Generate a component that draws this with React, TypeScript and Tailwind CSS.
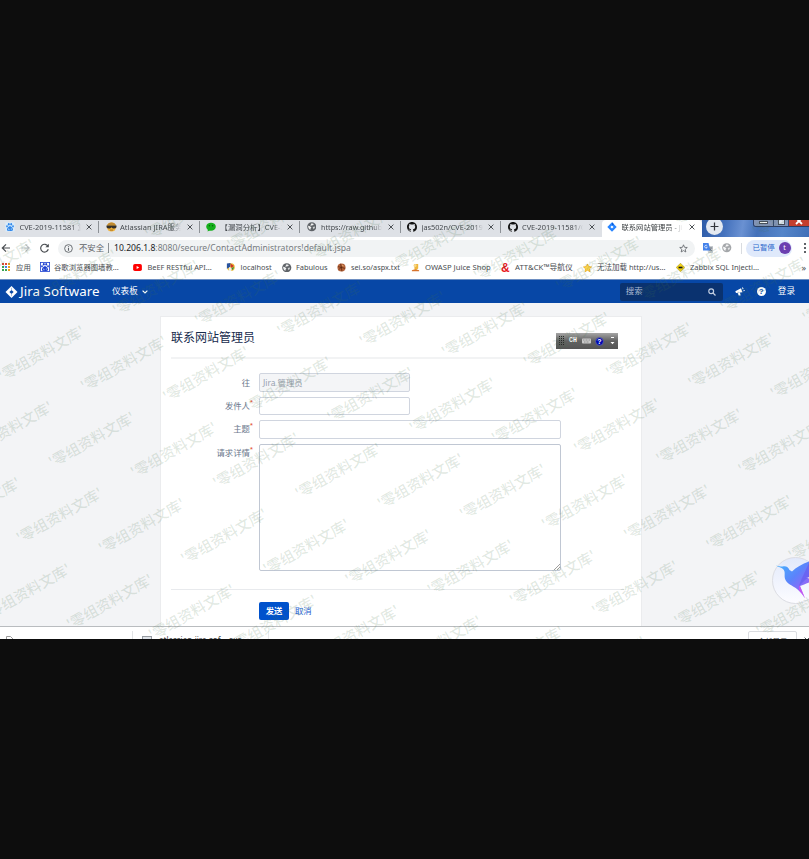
import React from "react";

const UI = "font-['Noto_Sans','Noto_Sans_CJK_SC',sans-serif]";

function Globe({ color = "#5f6368" }: { color?: string }) {
  return (
    <svg viewBox="0 0 10 10" className="h-[9.5px] w-[9.5px] shrink-0">
      <circle cx="5" cy="5" r="4.800" fill={color} />
      <path d="M1.200 4l2 .5 1.500 1.300-.8.8-.2 1.600C2 7.800 1 6 1.200 4zM4.800 1.300l2.400.7-.8 1.300-1.500.1-.6.9-.8-.8z" fill="#fff" opacity=".9" />
      <path d="M6 5.200l2.500-.4-.4 1.500-1.200 1.300z" fill="#fff" opacity=".7" />
    </svg>
  );
}

function Paw({ boxed = false }: { boxed?: boolean }) {
  const c = boxed ? "#1c3fd0" : "#2f86ea";
  return (
    <svg viewBox="0 0 10 10" className="h-[10px] w-[10px] shrink-0">
      <rect x=".4" y=".4" width="9.2" height="9.2" fill={boxed ? "#fff" : "#d9ecfc"} stroke={boxed ? c : "none"} strokeWidth=".8" />
      <ellipse cx="3.8" cy="2.3" rx=".9" ry="1.2" fill={c} />
      <ellipse cx="6.2" cy="2.3" rx=".9" ry="1.2" fill={c} />
      <ellipse cx="2" cy="4.3" rx=".9" ry="1.1" fill={c} />
      <ellipse cx="8" cy="4.3" rx=".9" ry="1.1" fill={c} />
      <path d="M5 4.200c1.200 0 3.300 2.200 3 3.600-.3 1.500-1.700 1.100-3 1.100s-2.700.4-3-1.100C1.700 6.400 3.800 4.200 5 4.200z" fill={c} />
      <path d="M3.600 6.500v1.300h1.200M6.300 6.300v1.600" stroke="#fff" strokeWidth=".5" fill="none" />
    </svg>
  );
}

function Github() {
  return (
    <svg viewBox="0 0 16 16" className="h-[10px] w-[10px] shrink-0">
      <path fill="#111" d="M8 0C3.580 0 0 3.580 0 8c0 3.540 2.290 6.530 5.470 7.590.4.070.55-.17.55-.38 0-.19-.01-.82-.01-1.490-2.010.37-2.530-.49-2.690-.94-.09-.23-.48-.94-.82-1.130-.28-.15-.68-.52-.01-.53.63-.01 1.080.58 1.230.82.72 1.210 1.870.87 2.330.66.070-.52.28-.87.51-1.070-1.780-.2-3.640-.89-3.640-3.950 0-.87.31-1.590.82-2.150-.08-.2-.36-1.020.08-2.120 0 0 .67-.21 2.200.82a7.600 7.600 0 014 0c1.530-1.040 2.200-.82 2.200-.82.44 1.100.16 1.920.08 2.120.51.56.82 1.270.82 2.150 0 3.070-1.870 3.750-3.650 3.950.29.25.54.73.54 1.480 0 1.070-.01 1.930-.01 2.200 0 .21.15.46.55.38A8 8 0 0016 8c0-4.420-3.580-8-8-8z" />
    </svg>
  );
}

function Ninja() {
  return (
    <svg viewBox="0 0 11 10" className="h-[10px] w-[11px] shrink-0">
      <circle cx="5.500" cy="5" r="4.600" fill="#f0b23c" />
      <path d="M1 3.200C1.500 1.500 3.400.4 5.500.4S9.500 1.500 10 3.200z" fill="#c08a30" />
      <path d="M.5 3.500h10v1.300c0 1.200-1 1.700-2.300 1.700C6.800 6.500 6 6 5.500 5.200 5 6 4.200 6.500 2.800 6.500 1.500 6.500.5 6 .5 4.800z" fill="#33302b" />
      <path d="M4 8.100h3" stroke="#7d4b14" strokeWidth=".6" />
    </svg>
  );
}

function WeChat() {
  return (
    <svg viewBox="0 0 10 10" className="h-[10px] w-[10px] shrink-0">
      <ellipse cx="5" cy="4.700" rx="4.800" ry="4" fill="#14b01c" />
      <path d="M2 7l-.4 2.400L4.500 8z" fill="#14b01c" />
      <circle cx="3.400" cy="3.700" r=".7" fill="#075f0b" />
      <circle cx="6.600" cy="3.700" r=".7" fill="#075f0b" />
    </svg>
  );
}

function JiraMark() {
  return (
    <svg viewBox="0 0 10 10" className="h-[10px] w-[10px] shrink-0">
      <path d="M5 .3L9.700 5 5 9.700.3 5z" fill="#2684ff" />
      <path d="M5 3.400L6.600 5 5 6.600 3.400 5z" fill="#fff" />
      <path d="M5 .3l2 2L5 3.400z" fill="#0a5bd8" />
    </svg>
  );
}

const tabs = [
  { icon: <Paw />, title: "CVE-2019-11581 复", size: "text-[7.400px]" },
  { icon: <Ninja />, title: "Atlassian JIRA服务器", size: "text-[7.500px]" },
  { icon: <WeChat />, title: "【漏洞分析】CVE-2", size: "text-[7.400px]" },
  { icon: <Globe />, title: "https://raw.github", size: "text-[7.200px]" },
  { icon: <Github />, title: "jas502n/CVE-2019", size: "text-[7.300px]" },
  { icon: <Github />, title: "CVE-2019-11581/C", size: "text-[7.400px]" },
];

function Cross() {
  return (
    <svg viewBox="0 0 6 6" className="h-[6px] w-[6px] shrink-0">
      <path d="M.6.6l4.800 4.800M5.400.6L.6 5.400" stroke="#45494d" strokeWidth=".95" />
    </svg>
  );
}

function TabStrip() {
  return (
    <div className="flex h-[17px] w-[809px] overflow-hidden bg-[#dee1e6]">
      {tabs.map((t, i) => (
        <div key={i} className={i === 0 ? "flex w-[99px] shrink-0 items-center pl-[5px]" : "flex w-[100.500px] shrink-0 items-center pl-[6.500px]"}>
          <div className="flex w-[14.500px] shrink-0 items-center pb-[3px]">{t.icon}</div>
          <div className={`${t.size} h-[17px] w-[61px] shrink-0 overflow-hidden leading-[14px] whitespace-nowrap text-[#45494e] [mask-image:linear-gradient(90deg,#000_85%,transparent)]`}>{t.title}</div>
          <div className="flex flex-1 items-center pb-[3px] pl-[5.500px]"><Cross /></div>
          {i < 5 && <div className="mb-[3px] h-[12px] w-px bg-[#8d9196]" />}
        </div>
      ))}
      <div className="flex w-[100px] shrink-0 items-center rounded-t-[4px] bg-white pl-[5px]">
        <div className="flex w-[15px] shrink-0 pb-[3px]"><JiraMark /></div>
        <div className="h-[17px] w-[61px] shrink-0 overflow-hidden text-[7.300px] leading-[14px] whitespace-nowrap text-[#3c4043] [mask-image:linear-gradient(90deg,#000_80%,transparent)]">联系网站管理员 - Jira</div>
        <div className="flex pb-[3px] pl-[6px]"><Cross /></div>
      </div>
      <div className="flex flex-1 justify-between bg-[linear-gradient(100deg,#2e5ca8_0%,#4572bd_22%,#6a91d2_38%,#4471b9_52%,#5585c9_75%,#3f6fb8_100%)] pl-[4px]">
        <div className="mt-[-2px] flex h-[17px] w-[17px] items-center justify-center rounded-full bg-[#e4e9f0]">
          <svg viewBox="0 0 8 8" className="h-[9px] w-[9px]"><path d="M4 .5v7M.5 4h7" stroke="#33373c" strokeWidth="1.100" /></svg>
        </div>
        <div className="flex h-[7px] w-[56px] overflow-hidden rounded-bl-[3px] border-b border-l border-[#2c3d63]">
          <div className="flex w-[20px] items-end justify-center border-r border-[#34466d] bg-[#8293b5] pb-[2px]"><div className="h-[3px] w-[9px] border border-[#494f5e] bg-white" /></div>
          <div className="flex w-[15px] items-end justify-center border-r border-[#34466d] bg-[#8293b5] pb-[1px]"><div className="h-[6px] w-[7px] border border-[#494f5e] bg-[#dfe5f0]" /></div>
          <div className="flex flex-1 items-start justify-center bg-[#c43e2d]">
            <svg viewBox="0 0 8 6" className="h-[6px] w-[8px]"><path d="M1-2l6 6M7-2L1 4" stroke="#fff" strokeWidth="1.800" /></svg>
          </div>
        </div>
      </div>
    </div>
  );
}

function Toolbar() {
  return (
    <div className="flex h-[22px] items-center bg-white">
      <svg viewBox="0 0 54 12" className="h-[12px] w-[54px] shrink-0" fill="none" strokeWidth="1.200">
        <path d="M10 6H2.500M6 2.300L2.300 6 6 9.700" stroke="#4a4e52" />
        <path d="M21.500 6H29M25.500 2.300L29.200 6l-3.700 3.700" stroke="#bcbfc2" />
        <path d="M48 4.300A3.900 3.900 0 1 0 48.300 7.300" stroke="#4a4e52" />
        <path d="M48.800 1.800v3.400h-3.400z" fill="#4a4e52" />
      </svg>
      <div className="ml-[4px] flex h-[17px] w-[637px] shrink-0 items-center rounded-full bg-[#f1f3f4] pl-[6px]">
        <svg viewBox="0 0 10 10" className="h-[9px] w-[9px]" fill="none" stroke="#5f6368"><circle cx="5" cy="5" r="4.300" /><path d="M5 4.500v3M5 2.500v1" strokeWidth="1.200" /></svg>
        <span className="ml-[6px] w-[25px] text-[8.400px] whitespace-nowrap text-[#5f6368]">不安全</span>
        <span className="ml-[4px] h-[10px] w-px bg-[#8c9094]" />
        <span className="ml-[5px] text-[8.610px] whitespace-nowrap text-[#777b80]"><span className="text-[#202124]">10.206.1.8</span>:8080/secure/ContactAdministrators!default.jspa</span>
        <svg viewBox="0 0 10 10" className="mr-[7px] ml-auto h-[9px] w-[9px]" fill="none" stroke="#5f6368" strokeWidth=".9"><path d="M5 .9l1.200 2.800 3 .2-2.300 2 .7 3L5 7.300 2.400 8.900l.7-3-2.300-2 3-.2z" /></svg>
      </div>
      <div className="ml-[8px] flex h-[11px] w-[10px] shrink-0 items-center">
        <svg viewBox="0 0 10 10" className="h-[10px] w-[10px]"><path d="M4 3h6v7H5z" fill="#c9cdd2" /><path d="M0 0h5.500l2 7.500H0z" fill="#4482ea" /><path d="M4.200 2.800a1.400 1.400 0 1 0 .1 1.500H3" stroke="#fff" strokeWidth=".7" fill="none" /><path d="M6.500 5H9.500M8 4.300c0 2-.6 3-1.300 3.700M7 6l2 2" stroke="#5b6470" strokeWidth=".6" fill="none" /></svg>
      </div>
      <div className="ml-[9px]"><Globe color="#a4a7aa" /></div>
      <span className="ml-[9px] h-[11px] w-px bg-[#d9dce0]" />
      <div className="ml-[4px] flex h-[17px] w-[46px] shrink-0 items-center justify-between rounded-full bg-[#dfe9fb] pr-px pl-[7px]">
        <span className="text-[7.400px] whitespace-nowrap text-[#2a68cc]">已暂停</span>
        <span className="flex h-[12px] w-[12px] items-center justify-center rounded-full bg-[#6b3fb0] text-[7px] text-white">t</span>
      </div>
      <div className="ml-[12px] flex flex-col gap-[2px]"><i className="h-[2px] w-[2px] bg-[#5f6368]" /><i className="h-[2px] w-[2px] bg-[#5f6368]" /><i className="h-[2px] w-[2px] bg-[#5f6368]" /></div>
    </div>
  );
}

function Apps() {
  const c = ["#e0452f", "#e0452f", "#e8a020", "#36a251", "#4080ee", "#e8a020", "#36a251", "#36a251", "#e8a020"];
  return (
    <svg viewBox="0 0 9 9" className="h-[9px] w-[9px]">
      {c.map((f, i) => <rect key={i} x={(i % 3) * 3} y={Math.floor(i / 3) * 3} width="2" height="2" fill={f} />)}
    </svg>
  );
}

const bookmarks = [
  { w: "w-[38px]", icon: <Apps />, label: "应用", gap: "ml-[5px]", size: "text-[7.400px]" },
  { w: "w-[93px]", icon: <Paw boxed />, label: "谷歌浏览器图墙教...", gap: "ml-[5px]", size: "text-[7.350px]" },
  { w: "w-[93px]", icon: <svg viewBox="0 0 10 8" className="h-[7px] w-[9px]"><rect width="10" height="8" rx="2" fill="#f00" /><path d="M4 2.300v3.400L7 4z" fill="#fff" /></svg>, label: "BeEF RESTful API...", gap: "ml-[5.500px]", size: "text-[7.400px]" },
  { w: "w-[56px]", icon: <svg viewBox="0 0 10 10" className="h-[10px] w-[10px]"><circle cx="5.500" cy="5" r="4.300" fill="#edbd3c" /><path d="M1 1l4-.5L4.500 5 1 7z" fill="#28539e" /><path d="M5 1l4 3-3.500 2z" fill="#cf3528" /><path d="M3.500 5l3 1-1 3.500H3z" fill="#eee" /><path d="M6 6l3-1-1.500 3.500z" fill="#318b45" /></svg>, label: "localhost", gap: "ml-[5.500px]", size: "text-[7.400px]" },
  { w: "w-[55px]", icon: <Globe />, label: "Fabulous", gap: "ml-[5px]", size: "text-[7.400px]" },
  { w: "w-[74px]", icon: <svg viewBox="0 0 10 10" className="h-[9px] w-[9px]"><circle cx="5" cy="5" r="4.500" fill="#b5643b" /><path d="M1 4l8 2M4 .8l1.500 8.400M1.800 7.500l6-5.500" stroke="#59260d" strokeWidth=".8" /><circle cx="6.500" cy="3" r="1" fill="#e3a06b" /></svg>, label: "sei.so/aspx.txt", gap: "ml-[5px]", size: "text-[7.300px]" },
  { w: "w-[90px]", icon: <svg viewBox="0 0 10 10" className="h-[9px] w-[9px]"><path d="M3.500 1h4.500v5l-2.500 2H4z" fill="#eeb63c" /><circle cx="4.500" cy="2.800" r="1.700" fill="#f7d788" /><path d="M1 8c2-1.500 6-.8 8 0v1.200H1z" fill="#d8732c" /></svg>, label: "OWASP Juice Shop", gap: "ml-[5px]", size: "text-[7.700px]" },
  { w: "w-[82px]", icon: <span className="font-['Liberation_Sans',sans-serif] text-[12px] leading-[10px] font-bold text-[#e8151b]">&amp;</span>, label: "ATT&CK™导航仪", gap: "ml-[5px]", size: "text-[7.750px]" },
  { w: "w-[93px]", icon: <svg viewBox="0 0 10 10" className="h-[10px] w-[10px]"><path d="M5 .5l1.400 2.900 3.100.4-2.300 2.100.6 3.200L5 7.600 2.200 9.100l.6-3.200L.5 3.800l3.100-.4z" fill="#fbd64b" stroke="#e7a719" strokeWidth=".8" /></svg>, label: "无法加载 http://us...", gap: "ml-[5px]", size: "text-[7.500px]" },
  { w: "w-[105px]", icon: <svg viewBox="0 0 10 10" className="h-[9px] w-[9px]"><path d="M5 .2L9.800 5 5 9.800.2 5z" fill="#f4d313" stroke="#6d5f0b" strokeWidth=".4" /><path d="M2.800 5h4.400" stroke="#151515" strokeWidth="1.800" /></svg>, label: "Zabbix SQL Injecti...", gap: "ml-[5px]", size: "text-[7.500px]" },
];

function Bookmarks() {
  return (
    <div className="flex h-[20px] items-center bg-white pb-[3px] pl-[2px]">
      {bookmarks.map((b, i) => (
        <div key={i} className={`${b.w} flex shrink-0 items-center whitespace-nowrap`}>
          <span className="flex w-[9px] shrink-0 items-center">{b.icon}</span>
          <span className={`${b.gap} ${b.size} text-[#484c50]`}>{b.label}</span>
        </div>
      ))}
      <span className="ml-auto pr-[3px] text-[9px] text-[#484c50]">»</span>
    </div>
  );
}

function JiraNav() {
  return (
    <div className="flex h-[24px] items-center border-t border-[#6e8fc2] bg-[#0747a6] text-white">
      <svg viewBox="0 0 12 12" className="ml-[5px] h-[12px] w-[13px] shrink-0"><path d="M6 0l6 6-6 6-6-6z" fill="#fff" /><path d="M6 3.900L8.100 6 6 8.100 3.900 6z" fill="#0747a6" /><path d="M6 1.800v2.500M6 7.700v2.500" stroke="#85a5d6" strokeWidth=".7" /></svg>
      <span className="ml-[2px] w-[81px] pb-px text-[13.300px] leading-[20px] tracking-[0.080px] whitespace-nowrap">Jira Software</span>
      <span className="ml-[11px] text-[8.600px]">仪表板</span>
      <svg viewBox="0 0 6 4" className="ml-[4px] h-[4px] w-[6px]"><path d="M.6.6L3 3 5.400.6" stroke="#fff" strokeWidth="1.200" fill="none" /></svg>
      <div className="mr-[12px] ml-auto flex h-[18px] w-[103px] items-center justify-between rounded-[2px] bg-[#0a326f] pr-[7px] pl-[6px]">
        <span className="text-[8.400px] text-[#a9b9d2]">搜索</span>
        <svg viewBox="0 0 8 8" className="h-[8px] w-[8px]" fill="none" stroke="#c3cfe2" strokeWidth="1.200"><circle cx="3.200" cy="3.200" r="2.400" /><path d="M5 5l2.500 2.500" /></svg>
      </div>
      <svg viewBox="0 0 10 9" className="h-[9px] w-[10px]" fill="#fff"><path d="M.3 4.300L6 1.300l1.500 4-6.500.8zM2.600 6l2.400-.2.700 2.700H3.700zM7 .8l.8-.5.8 1.700-.8.4zM8.200 3.500l1.500-.4v1l-1.300.2z" /></svg>
      <span className="ml-[12px] flex h-[9px] w-[9px] items-center justify-center rounded-full bg-white font-['Liberation_Sans',sans-serif] text-[8px] font-bold text-[#0747a6]">?</span>
      <span className="mr-[14px] ml-[12px] text-[8.600px]">登录</span>
    </div>
  );
}

function Label({ children, required = false }: { children: string; required?: boolean }) {
  return (
    <div className="relative w-[91px] shrink-0 pt-[2px] text-right text-[8.400px] leading-[13px] text-[#6b778c]">
      {children}
      {required && <span className="absolute top-[1px] -right-[3px] text-[6px] leading-[9px] text-[#de350b]">*</span>}
    </div>
  );
}

function LanguageBar() {
  return (
    <div className="absolute top-[16px] left-[395px] flex h-[16px] w-[62px] items-center bg-linear-to-b from-[#a5a5a5] via-[#626262] to-[#555] pl-[3px]">
      <svg viewBox="0 0 6 10" className="h-[10px] w-[6px]" fill="#282828">
        {[0, 1, 2, 3, 4].map((r) => [0, 1, 2].map((c) => <rect key={`${r}${c}`} x={c * 2} y={r * 2} width="1" height="1" />))}
      </svg>
      <span className="ml-[4px] w-[8px] font-['Liberation_Mono',monospace] text-[6.500px] leading-none font-bold text-white">CH</span>
      <svg viewBox="0 0 9 6" className="ml-[5px] h-[6px] w-[9px]"><rect y=".5" width="9" height="5" rx=".8" fill="#c9c9c9" /><path d="M1 2h7M2 4h5" stroke="#777" strokeWidth=".7" strokeDasharray="1 .5" /></svg>
      <span className="ml-[5px] flex h-[7px] w-[7px] items-center justify-center rounded-full bg-[#0009b5] font-['Liberation_Sans',sans-serif] text-[7px] leading-none font-bold text-white outline outline-[#4b52a8]">?</span>
      <svg viewBox="0 0 5 8" className="ml-[7px] h-[8px] w-[5px]" fill="#fff"><path d="M1 0h3v1H1zM.5 5h4l-2 2.200z" /></svg>
    </div>
  );
}

function ContactPage() {
  return (
    <div className="h-[323px] bg-[#f3f4f6] pt-[13px] pl-[160px]">
      <div className="relative h-[310px] w-[482px] border-t border-r border-l border-[#ebecee] bg-white pl-[10px]">
        <div className="flex h-[42px] items-center border-b-2 border-[#f2f3f4] pt-[1px] text-[12px] text-[#172b4d]">联系网站管理员</div>
        <LanguageBar />
        <div className="mt-[14px] flex h-[24px]">
          <div className="-ml-[12px] pt-px"><Label>往</Label></div>
          <div className="ml-[9px] flex h-[19px] w-[151px] items-center rounded-[2px] border border-[#d0d5df] bg-[#f4f5f7] pt-px pl-[3px] text-[8.400px] text-[#98a1b0]">Jira 管理员</div>
        </div>
        <div className="flex h-[23px]">
          <div className="-ml-[12px]"><Label required>发件人</Label></div>
          <input className="ml-[9px] h-[18px] w-[151px] rounded-[2px] border border-[#d0d5df] bg-white" />
        </div>
        <div className="flex h-[24px]">
          <div className="-ml-[12px]"><Label required>主题</Label></div>
          <input className="ml-[9px] h-[19px] w-[302px] rounded-[2px] border border-[#d0d5df] bg-white" />
        </div>
        <div className="flex h-[127px]">
          <div className="-ml-[12px]"><Label required>请求详情</Label></div>
          <div className="ml-[9px] flex h-[127px] w-[302px] items-end justify-end rounded-[2px] border border-[#c0c7d3] bg-white">
            <svg viewBox="0 0 6 6" className="h-[6px] w-[6px]" stroke="#777" strokeWidth=".7"><path d="M0 6l6-6M3 6l3-3" /></svg>
          </div>
        </div>
        <div className="mt-[18px] w-[453px] border-t border-[#e8eaed]" />
        <div className="mt-[12px] flex items-center pl-[88px]">
          <button className="h-[18px] w-[30px] rounded-[2px] bg-[#0052cc] text-[8.400px] font-bold text-white">发送</button>
          <span className="ml-[6px] text-[8.400px] text-[#1b5fcf]">取消</span>
        </div>
      </div>
    </div>
  );
}

function Downloads() {
  return (
    <div className="flex h-[13px] overflow-hidden border-t border-[#b9bcbf] bg-white">
      <svg viewBox="0 0 8 10" className="mt-[9px] ml-[6px] h-[10px] w-[8px]" fill="none" stroke="#999"><path d="M.5.5h4l3 3v6h-7z" /></svg>
      <div className="mt-[4px] ml-[118px] h-[12px] w-px bg-[#e1e3e5]" />
      <div className="mt-[9px] ml-[9px] h-[8px] w-[10px] border border-[#969ba0] bg-[#dfe3e8]" />
      <span className="mt-[7px] ml-[7px] w-[84px] text-[8px] leading-[11px] whitespace-nowrap text-[#3c4043]">atlassian-jira-sof....exe</span>
      <div className="mt-[4px] ml-[25px] h-[12px] w-px bg-[#e8eaec]" />
      <div className="mt-[4px] ml-auto h-[18px] w-[49px] shrink-0 rounded-[2px] border border-[#dadce0] pt-[4px] text-center text-[7.400px] leading-[11px] text-[#3c4043]">全部显示</div>
      <div className="-mr-px mt-[10px] ml-[7px] shrink-0"><Cross /></div>
    </div>
  );
}

function Bird() {
  return (
    <svg viewBox="0 0 38 50" className="absolute top-[335px] right-0 h-[50px] w-[38px]">
      <defs>
        <linearGradient id="wing" x1="0" y1="0" x2=".9" y2="1">
          <stop offset="0" stopColor="#43b9ff" />
          <stop offset=".5" stopColor="#5b83fb" />
          <stop offset="1" stopColor="#b356f5" />
        </linearGradient>
        <linearGradient id="disc" x1="0" y1="0" x2="0" y2="1"><stop offset="0" stopColor="#e2e9fb" /><stop offset="1" stopColor="#fcfcff" /></linearGradient>
      </defs>
      <circle cx="24.500" cy="25.500" r="23" fill="url(#disc)" stroke="#dcdde3" />
      <path d="M5 10.500c4 1 5.800 1.300 7.500.8 3-.4 5 1.300 6 3.700l2.500 1.500C25 12.500 31 9 38 6.500v15.500l-3 .5 3 1v4c-4 1.500-6 2.500-9 3.500l5 12.500c-2-3.500-4.500-6.500-8-9.500-4-3.500-11-5-12.200-11-.5-4 .8-6.500-1.800-9C10.500 12.500 7 12 5 10.500z" fill="url(#wing)" />
      <path d="M38 8v14l-4 3-6 6c1-3 2-6 4-10z" fill="#6258ec" opacity=".6" />
      <path d="M28 30.500l1 .5 5.200 12.500c-1.700-3-3.500-5.500-6.200-8z" fill="#d84df0" opacity=".7" />
    </svg>
  );
}

const marks: { x: number; y: number }[] = [];
for (let n = -3; n <= 5; n++) {
  for (let m = -3; m <= 13; m++) {
    const x = 41 + m * 82.200 - n * 32.100;
    const y = 132.300 + m * 10.400 + n * 75.900;
    if (x > -50 && x < 860 && y > -35 && y < 450) marks.push({ x, y });
  }
}

function Watermark() {
  return (
    <svg viewBox="0 0 809 419" className="pointer-events-none absolute inset-0 h-[419px] w-[809px]" aria-hidden="true">
      {marks.map((p, i) => (
        <text key={i} transform={`translate(${p.x} ${p.y}) rotate(-29.500)`} textAnchor="middle" dominantBaseline="central" fontSize="14.600" fill="rgb(70,115,75)" fillOpacity=".16" className="font-['Noto_Sans_CJK_SC',sans-serif] font-medium">'零组资料文库'</text>
      ))}
    </svg>
  );
}

export default function App() {
  return (
    <div className={`${UI} flex h-[859px] w-[809px] flex-col overflow-hidden bg-[#0d0d0d] pt-[220px]`}>
      <div className="relative h-[419px] overflow-hidden">
        <TabStrip />
        <Toolbar />
        <Bookmarks />
        <JiraNav />
        <ContactPage />
        <Downloads />
        <Bird />
        <Watermark />
      </div>
    </div>
  );
}
